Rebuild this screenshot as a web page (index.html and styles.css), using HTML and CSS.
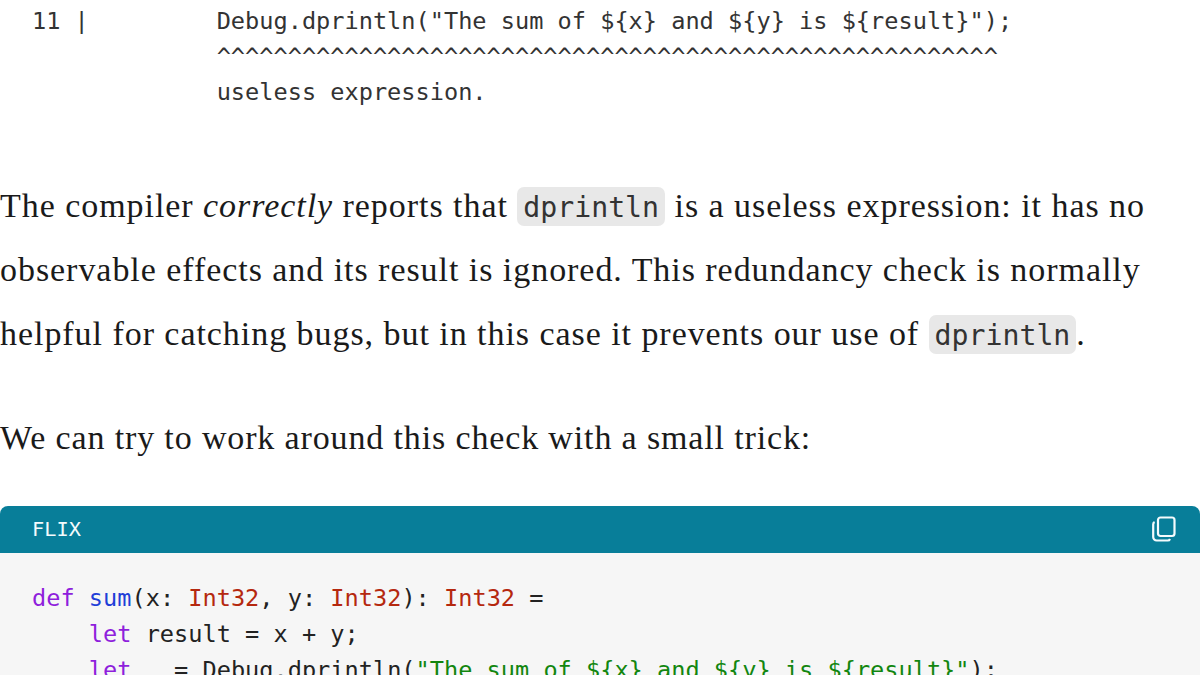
FILE: index.html
```html
<!DOCTYPE html>
<html lang="en">
<head>
<meta charset="utf-8">
<title>Debugging in Flix</title>
<link rel="stylesheet" href="styles.css">
</head>
<body>
<main class="page">
<pre class="output">11 |         Debug.dprintln("The sum of ${x} and ${y} is ${result}");
             ^^^^^^^^^^^^^^^^^^^^^^^^^^^^^^^^^^^^^^^^^^^^^^^^^^^^^^^
             useless expression.</pre>
<p class="para first">The compiler <em>correctly</em> reports that <code class="inline">dprintln</code> is a useless expression: it has no<br>observable effects and its result is ignored. This redundancy check is normally<br>helpful for catching bugs, but in this case it prevents our use of <code class="inline">dprintln</code>.</p>
<p class="para second">We can try to work around this check with a small trick:</p>
<section class="block">
<header class="block-head">
<span class="lang">FLIX</span>
<svg class="copy" viewBox="0 0 24 26" width="24" height="26" fill="none" stroke="currentColor" stroke-width="2.2" aria-hidden="true"><rect x="6" y="1.5" width="16.5" height="18.5" rx="2.5"/><path d="M2.6 6 A2.5 2.5 0 0 0 1.2 8.2 V21 A3.5 3.5 0 0 0 4.7 24.5 H15.5 A2.5 2.5 0 0 0 18 23"/></svg>
</header>
<pre class="code"><span class="kw">def</span> <span class="fn">sum</span>(x: <span class="ty">Int32</span>, y: <span class="ty">Int32</span>): <span class="ty">Int32</span> =
    <span class="kw">let</span> result = x + y;
    <span class="kw">let</span> _ = Debug.dprintln(<span class="st">"The sum of ${x} and ${y} is ${result}"</span>);</pre>
</section>
</main>
</body>
</html>
```
FILE: styles.css
```css
html, body {
  margin: 0;
  height: 675px;
  overflow: hidden;
  background: #fff;
}
.page {
  width: 1200px;
  color: #1a1a1a;
}
.output {
  margin: 0;
  padding: 4px 0 0 32px;
  font: 23.6px/35.5px "DejaVu Sans Mono", monospace;
  color: #333;
}
.para {
  margin: 0;
  font-family: "Liberation Serif", serif;
  font-size: 34px;
  letter-spacing: 0.95px;
  line-height: 64px;
  color: #1a1a1a;
}
.first { margin-top: 63px; }
.second { margin-top: 40px; letter-spacing: 0.86px; }
.inline {
  font-family: "DejaVu Sans Mono", monospace;
  font-size: 28.2px;
  letter-spacing: 0;
  line-height: 1;
  background: #e8e8e8;
  border-radius: 7px;
  padding: 4px 6px 2px;
  color: #333;
}
.block { margin-top: 36px; }
.block-head {
  height: 47px;
  background: #087e99;
  color: #f4fbfd;
  border-radius: 8px 8px 0 0;
  display: flex;
  align-items: center;
  justify-content: space-between;
  padding: 0 24px 0 32px;
}
.lang {
  font: 20.3px "DejaVu Sans Mono", monospace;
}
.copy { display: block; }
.code {
  margin: 0;
  background: #f6f6f6;
  padding: 27px 32px;
  font: 23.6px/36px "DejaVu Sans Mono", monospace;
  color: #222;
}
.kw { color: #8f1fdc; }
.fn { color: #1f3fd8; }
.ty { color: #b5280f; }
.st { color: #12860f; }
```
